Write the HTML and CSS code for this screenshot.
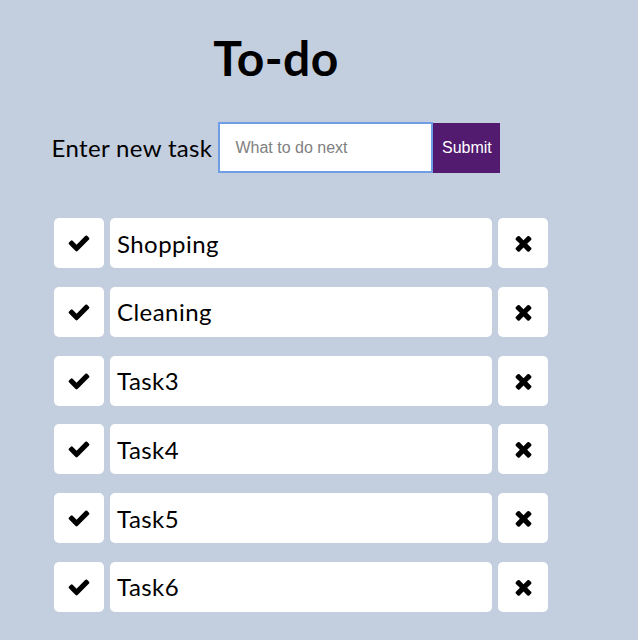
FILE: index.html
```html
<!DOCTYPE html>
<html lang="en">
<head>
<meta charset="utf-8">
<title>To-do</title>
<link rel="stylesheet" href="styles.css">
</head>
<body>
<main class="app">
  <h1 class="title">To-do</h1>
  <form class="add-form">
    <label class="add-label" for="newtask">Enter new task</label>
    <input class="add-input" id="newtask" type="text" placeholder="What to do next">
    <button class="add-submit" type="button">Submit</button>
  </form>
  <ul class="tasks">
    <li class="task">
      <button class="icon-btn" type="button"><svg class="ic-check" viewBox="0 0 1792 1792"><path d="M1671 566q0 40-28 68l-724 724-136 136q-28 28-68 28t-68-28l-136-136-362-362q-28-28-28-68t28-68l136-136q28-28 68-28t68 28l294 295 656-657q28-28 68-28t68 28l136 136q28 28 28 68z"/></svg></button>
      <div class="task-text">Shopping</div>
      <button class="icon-btn" type="button"><svg class="ic-times" viewBox="0 0 1408 1792"><path d="M1298 1322q0 40-28 68l-136 136q-28 28-68 28t-68-28l-294-294-294 294q-28 28-68 28t-68-28l-136-136q-28-28-28-68t28-68l294-294-294-294q-28-28-28-68t28-68l136-136q28-28 68-28t68 28l294 294 294-294q28-28 68-28t68 28l136 136q28 28 28 68t-28 68l-294 294 294 294q28 28 28 68z"/></svg></button>
    </li>
    <li class="task">
      <button class="icon-btn" type="button"><svg class="ic-check" viewBox="0 0 1792 1792"><path d="M1671 566q0 40-28 68l-724 724-136 136q-28 28-68 28t-68-28l-136-136-362-362q-28-28-28-68t28-68l136-136q28-28 68-28t68 28l294 295 656-657q28-28 68-28t68 28l136 136q28 28 28 68z"/></svg></button>
      <div class="task-text">Cleaning</div>
      <button class="icon-btn" type="button"><svg class="ic-times" viewBox="0 0 1408 1792"><path d="M1298 1322q0 40-28 68l-136 136q-28 28-68 28t-68-28l-294-294-294 294q-28 28-68 28t-68-28l-136-136q-28-28-28-68t28-68l294-294-294-294q-28-28-28-68t28-68l136-136q28-28 68-28t68 28l294 294 294-294q28-28 68-28t68 28l136 136q28 28 28 68t-28 68l-294 294 294 294q28 28 28 68z"/></svg></button>
    </li>
    <li class="task">
      <button class="icon-btn" type="button"><svg class="ic-check" viewBox="0 0 1792 1792"><path d="M1671 566q0 40-28 68l-724 724-136 136q-28 28-68 28t-68-28l-136-136-362-362q-28-28-28-68t28-68l136-136q28-28 68-28t68 28l294 295 656-657q28-28 68-28t68 28l136 136q28 28 28 68z"/></svg></button>
      <div class="task-text">Task3</div>
      <button class="icon-btn" type="button"><svg class="ic-times" viewBox="0 0 1408 1792"><path d="M1298 1322q0 40-28 68l-136 136q-28 28-68 28t-68-28l-294-294-294 294q-28 28-68 28t-68-28l-136-136q-28-28-28-68t28-68l294-294-294-294q-28-28-28-68t28-68l136-136q28-28 68-28t68 28l294 294 294-294q28-28 68-28t68 28l136 136q28 28 28 68t-28 68l-294 294 294 294q28 28 28 68z"/></svg></button>
    </li>
    <li class="task">
      <button class="icon-btn" type="button"><svg class="ic-check" viewBox="0 0 1792 1792"><path d="M1671 566q0 40-28 68l-724 724-136 136q-28 28-68 28t-68-28l-136-136-362-362q-28-28-28-68t28-68l136-136q28-28 68-28t68 28l294 295 656-657q28-28 68-28t68 28l136 136q28 28 28 68z"/></svg></button>
      <div class="task-text">Task4</div>
      <button class="icon-btn" type="button"><svg class="ic-times" viewBox="0 0 1408 1792"><path d="M1298 1322q0 40-28 68l-136 136q-28 28-68 28t-68-28l-294-294-294 294q-28 28-68 28t-68-28l-136-136q-28-28-28-68t28-68l294-294-294-294q-28-28-28-68t28-68l136-136q28-28 68-28t68 28l294 294 294-294q28-28 68-28t68 28l136 136q28 28 28 68t-28 68l-294 294 294 294q28 28 28 68z"/></svg></button>
    </li>
    <li class="task">
      <button class="icon-btn" type="button"><svg class="ic-check" viewBox="0 0 1792 1792"><path d="M1671 566q0 40-28 68l-724 724-136 136q-28 28-68 28t-68-28l-136-136-362-362q-28-28-28-68t28-68l136-136q28-28 68-28t68 28l294 295 656-657q28-28 68-28t68 28l136 136q28 28 28 68z"/></svg></button>
      <div class="task-text">Task5</div>
      <button class="icon-btn" type="button"><svg class="ic-times" viewBox="0 0 1408 1792"><path d="M1298 1322q0 40-28 68l-136 136q-28 28-68 28t-68-28l-294-294-294 294q-28 28-68 28t-68-28l-136-136q-28-28-28-68t28-68l294-294-294-294q-28-28-28-68t28-68l136-136q28-28 68-28t68 28l294 294 294-294q28-28 68-28t68 28l136 136q28 28 28 68t-28 68l-294 294 294 294q28 28 28 68z"/></svg></button>
    </li>
    <li class="task">
      <button class="icon-btn" type="button"><svg class="ic-check" viewBox="0 0 1792 1792"><path d="M1671 566q0 40-28 68l-724 724-136 136q-28 28-68 28t-68-28l-136-136-362-362q-28-28-28-68t28-68l136-136q28-28 68-28t68 28l294 295 656-657q28-28 68-28t68 28l136 136q28 28 28 68z"/></svg></button>
      <div class="task-text">Task6</div>
      <button class="icon-btn" type="button"><svg class="ic-times" viewBox="0 0 1408 1792"><path d="M1298 1322q0 40-28 68l-136 136q-28 28-68 28t-68-28l-294-294-294 294q-28 28-68 28t-68-28l-136-136q-28-28-28-68t28-68l294-294-294-294q-28-28-28-68t28-68l136-136q28-28 68-28t68 28l294 294 294-294q28-28 68-28t68 28l136 136q28 28 28 68t-28 68l-294 294 294 294q28 28 28 68z"/></svg></button>
    </li>
  </ul>
</main>
</body>
</html>
```

FILE: styles.css
```css
html, body {
  margin: 0;
  padding: 0;
  background: #c3cedf;
  height: 100%;
}

body {
  font-family: Lato, "Liberation Sans", sans-serif;
  color: #000;
}

.app {
  width: 552px;
  padding-top: 29px;
}

.title {
  margin: 0;
  text-align: center;
  font-size: 48px;
  font-weight: 700;
  line-height: 58px;
  letter-spacing: 0.4px;
}

.add-form {
  display: flex;
  justify-content: center;
  align-items: center;
  margin-top: 35px;
}

.add-label {
  font-size: 24px;
  line-height: 29px;
  letter-spacing: 0.35px;
  margin-right: 6px;
}

.add-input {
  box-sizing: border-box;
  width: 215px;
  height: 51px;
  margin: 0;
  border: 2px solid #6f9ee6;
  padding: 0 0 0 15px;
  font-family: "Liberation Sans", Arial, sans-serif;
  font-size: 16px;
  background: #fff;
  outline: none;
  caret-color: #000;
}

.add-input::placeholder {
  color: #808080;
}

.add-submit {
  box-sizing: border-box;
  width: 67px;
  height: 50px;
  margin: 0;
  border: none;
  background: #521b6f;
  color: #fff;
  font-family: "Liberation Sans", Arial, sans-serif;
  font-size: 16px;
  padding: 0;
}

.tasks {
  list-style: none;
  margin: 45px 0 0;
  padding: 0 0 0 54px;
  display: flex;
  flex-direction: column;
  gap: 18.8px;
}

.task {
  display: flex;
  gap: 6px;
  height: 50px;
}

.icon-btn {
  box-sizing: border-box;
  width: 50px;
  height: 50px;
  border: none;
  border-radius: 5px;
  background: #fff;
  padding: 0;
  margin: 0;
  display: flex;
  align-items: center;
  justify-content: center;
}

.ic-check {
  width: 24px;
  height: 24px;
  fill: #000;
}

.ic-times {
  width: 19px;
  height: 24px;
  fill: #000;
}

.task-text {
  box-sizing: border-box;
  width: 382px;
  height: 50px;
  background: #fff;
  border-radius: 5px;
  padding-left: 7px;
  display: flex;
  align-items: center;
  font-size: 24px;
  line-height: 29px;
  letter-spacing: 0.45px;
}
```
